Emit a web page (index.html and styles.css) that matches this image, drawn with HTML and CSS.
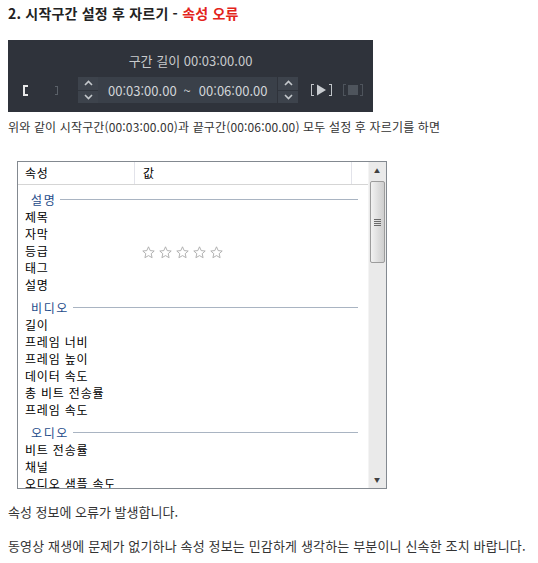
FILE: index.html
```html
<!DOCTYPE html>
<html lang="ko">
<head>
    <meta charset="UTF-8">
    <title>시작구간 설정 후 자르기 - 속성 오류</title>
    <link rel="stylesheet" href="styles.css">
</head>
<body>

    <h2 class="title">2. 시작구간 설정 후 자르기 - <span class="error">속성 오류</span></h2>

    <!-- 구간 편집 바 -->
    <div class="player">
        <div class="length">구간 길이 00:03:00.00</div>
        <div class="controls">
            <svg class="mark" width="6" height="11" viewBox="0 0 6 11"><path d="M1 0h5v2H3v7h3v2H1z" fill="#e8e8e8"/></svg>
            <svg class="mark end" width="4" height="11" viewBox="0 0 4 11"><path d="M0 1h3v9H0V9h2V2H0z" fill="#5a6068"/></svg>

            <div class="spin">
                <span class="up"><svg width="9" height="6" viewBox="0 0 9 6"><path d="M1 5l3.5-3.5L8 5" stroke="#c4c8cc" stroke-width="1.6" fill="none"/></svg></span>
                <span class="down"><svg width="9" height="6" viewBox="0 0 9 6"><path d="M1 1l3.5 3.5L8 1" stroke="#c4c8cc" stroke-width="1.6" fill="none"/></svg></span>
            </div>
            <div class="range">
                <span>00:03:00.00</span>
                <span class="tilde">~</span>
                <span>00:06:00.00</span>
            </div>
            <div class="spin">
                <span class="up"><svg width="9" height="6" viewBox="0 0 9 6"><path d="M1 5l3.5-3.5L8 5" stroke="#c4c8cc" stroke-width="1.6" fill="none"/></svg></span>
                <span class="down"><svg width="9" height="6" viewBox="0 0 9 6"><path d="M1 1l3.5 3.5L8 1" stroke="#c4c8cc" stroke-width="1.6" fill="none"/></svg></span>
            </div>

            <svg class="btn" width="23" height="14" viewBox="0 0 23 14">
                <path d="M1 1h3v1H2v10h2v1H1z" fill="#c0c4c8"/>
                <path d="M7 1.5l9 5.5-9 5.5z" fill="#c8ccd0"/>
                <path d="M22 1h-3v1h2v10h-2v1h3z" fill="#c0c4c8"/>
            </svg>
            <svg class="btn stop" width="22" height="14" viewBox="0 0 22 14">
                <path d="M1 1h3v1H2v10h2v1H1z" fill="#4e545c"/>
                <rect x="6" y="2" width="10" height="10" fill="#4e545c"/>
                <path d="M21 1h-3v1h2v10h-2v1h3z" fill="#4e545c"/>
            </svg>
        </div>
    </div>

    <p class="desc">위와 같이 시작구간(00:03:00.00)과 끝구간(00:06:00.00) 모두 설정 후 자르기를 하면</p>

    <!-- 속성 창 -->
    <div class="props">
        <div class="props-list">
            <div class="props-head">
                <div class="col-name">속성</div>
                <div class="col-value">값</div>
                <div class="col-rest"></div>
            </div>

            <div class="group"><span>설명</span></div>
            <div class="row">제목</div>
            <div class="row">자막</div>
            <div class="row">
                <span class="name">등급</span>
                <span class="stars">
                    <svg width="13" height="13" viewBox="0 0 13 13"><path class="star" d="M6.5 .8l1.7 3.8 4 .4-3 2.7.9 4-3.6-2.1-3.6 2.1.9-4-3-2.7 4-.4z"/></svg>
                    <svg width="13" height="13" viewBox="0 0 13 13"><path class="star" d="M6.5 .8l1.7 3.8 4 .4-3 2.7.9 4-3.6-2.1-3.6 2.1.9-4-3-2.7 4-.4z"/></svg>
                    <svg width="13" height="13" viewBox="0 0 13 13"><path class="star" d="M6.5 .8l1.7 3.8 4 .4-3 2.7.9 4-3.6-2.1-3.6 2.1.9-4-3-2.7 4-.4z"/></svg>
                    <svg width="13" height="13" viewBox="0 0 13 13"><path class="star" d="M6.5 .8l1.7 3.8 4 .4-3 2.7.9 4-3.6-2.1-3.6 2.1.9-4-3-2.7 4-.4z"/></svg>
                    <svg width="13" height="13" viewBox="0 0 13 13"><path class="star" d="M6.5 .8l1.7 3.8 4 .4-3 2.7.9 4-3.6-2.1-3.6 2.1.9-4-3-2.7 4-.4z"/></svg>
                </span>
            </div>
            <div class="row">태그</div>
            <div class="row">설명</div>

            <div class="group"><span>비디오</span></div>
            <div class="row">길이</div>
            <div class="row">프레임 너비</div>
            <div class="row">프레임 높이</div>
            <div class="row">데이터 속도</div>
            <div class="row">총 비트 전송률</div>
            <div class="row">프레임 속도</div>

            <div class="group"><span>오디오</span></div>
            <div class="row">비트 전송률</div>
            <div class="row">채널</div>
            <div class="row">오디오 샘플 속도</div>
        </div>

        <div class="scrollbar">
            <div class="arrow">&#9650;</div>
            <div class="track">
                <div class="thumb"><span class="grip"></span></div>
            </div>
            <div class="arrow">&#9660;</div>
        </div>
    </div>

    <p class="msg">속성 정보에 오류가 발생합니다.</p>
    <p class="msg last">동영상 재생에 문제가 없기하나 속성 정보는 민감하게 생각하는 부분이니 신속한 조치 바랍니다.</p>

</body>
</html>
```

FILE: styles.css
```css
body {
    margin: 0;
    padding: 4px 8px;
    font-family: "Noto Sans CJK KR", "Noto Sans", sans-serif;
    font-size: 13px;
    color: #333;
    background-color: #fff;
}

.title {
    margin: 0;
    font-size: 14px;
    line-height: 18px;
    font-weight: bold;
    letter-spacing: 0.2px;
    color: #222;
}

.title .error {
    color: #e3241b;
}

/* player bar */
.player {
    margin-top: 18px;
    width: 365px;
    height: 72px;
    background-color: #2f333b;
    color: #c8cacc;
}

.length {
    padding-top: 12px;
    height: 18px;
    line-height: 18px;
    text-align: center;
    font-size: 13px;
}

.controls {
    display: flex;
    align-items: center;
    margin-top: 7px;
    height: 26px;
    padding-left: 14px;
}

.mark {
    display: block;
}

.mark.end {
    margin-left: 27px;
}

.spin {
    display: flex;
    flex-direction: column;
    width: 20px;
    height: 26px;
    background-color: #3d434c;
}

.controls .spin:first-of-type {
    margin-left: 19px;
}

.spin span {
    flex: 1;
    display: flex;
    align-items: center;
    justify-content: center;
}

.spin .up {
    border-bottom: 1px solid #30353d;
}

.range {
    display: flex;
    align-items: center;
    width: 179px;
    height: 26px;
    margin: 0 1px 0 0;
    padding-left: 10px;
    box-sizing: border-box;
    background-color: #3a4049;
    color: #d2d5d8;
    font-size: 13px;
}

.tilde {
    margin: 0 8px 0 7px;
}

.btn {
    display: block;
    margin-left: 12px;
}

.btn.stop {
    margin-left: 9px;
}

.desc {
    margin: 6px 0 0;
    font-size: 12px;
    letter-spacing: 0.15px;
    line-height: 18px;
}

/* properties window */
.props {
    display: flex;
    margin: 25px 0 0 9px;
    width: 370px;
    height: 328px;
    box-sizing: border-box;
    border: 1px solid #838990;
    overflow: hidden;
    font-size: 12px;
    letter-spacing: 0.8px;
    color: #000;
}

.props-list {
    flex: 1;
    overflow: hidden;
}

.props-head {
    display: flex;
    height: 22px;
    line-height: 21px;
    border-bottom: 1px solid #d5d5d5;
}

.props-head div {
    box-sizing: border-box;
    padding-left: 7px;
    border-right: 1px solid #e2e3ea;
}

.col-name {
    width: 117px;
}

.col-value {
    width: 217px;
    padding-left: 8px !important;
}

.col-rest {
    flex: 1;
    border-right: none !important;
}

.group {
    display: flex;
    align-items: center;
    height: 18px;
    margin-top: 5px;
    padding: 0 10px 0 13px;
    color: #1e4c8a;
}

.group span {
    margin-right: 4px;
    letter-spacing: 1.6px;
}

.group::after {
    content: "";
    flex: 1;
    height: 1px;
    background-color: #a9b4c2;
}

.row {
    display: flex;
    align-items: center;
    height: 17px;
    line-height: 17px;
    padding-left: 7px;
    white-space: nowrap;
}

.row .name {
    width: 117px;
}

.stars {
    display: flex;
    gap: 4px;
    padding-top: 3px;
}

.stars svg {
    display: block;
}

.star {
    fill: #fff;
    stroke: #a9a9a9;
    stroke-width: 0.9;
}

/* scrollbar */
.scrollbar {
    display: flex;
    flex-direction: column;
    width: 17px;
    background-color: #eaeaea;
    border-left: 1px solid #f4f4f4;
}

.arrow {
    height: 17px;
    line-height: 17px;
    text-align: center;
    font-size: 6px;
    color: #404040;
}

.track {
    flex: 1;
}

.thumb {
    display: flex;
    align-items: center;
    justify-content: center;
    margin: 2px 1px 0;
    height: 80px;
    border: 1px solid #9c9c9c;
    border-radius: 2px;
    background: linear-gradient(to right, #f2f2f2, #dcdcdc 60%, #cfcfcf);
}

.grip {
    width: 7px;
    height: 7px;
    background: repeating-linear-gradient(to bottom, #6a6a6a 0, #6a6a6a 1px, transparent 1px, transparent 2px);
}

.msg {
    margin: 14px 0 0;
    line-height: 18px;
}

.msg.last {
    margin-top: 16px;
    letter-spacing: 0.15px;
}
```
